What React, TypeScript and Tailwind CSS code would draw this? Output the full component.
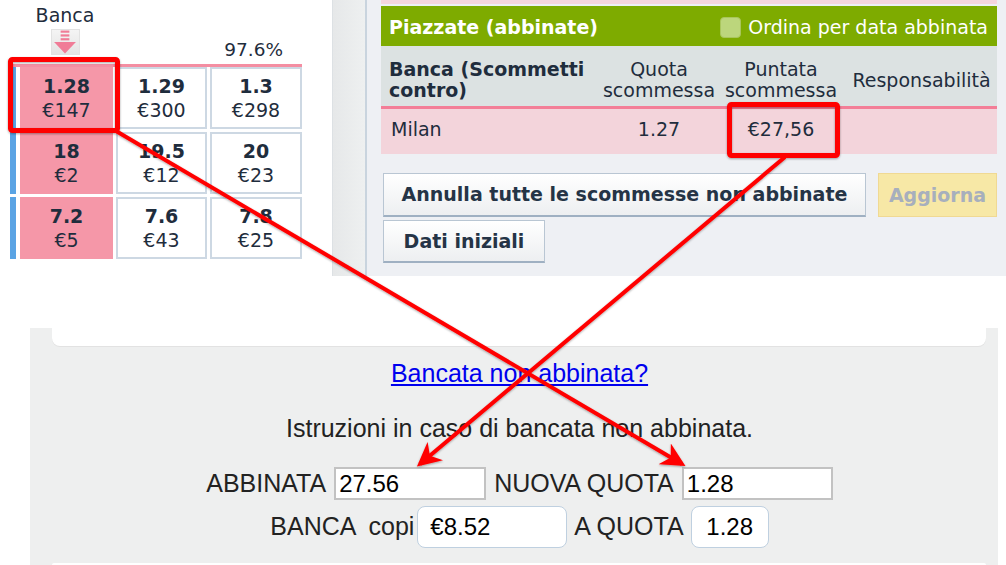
import React from "react";

type Cell = { odds: string; amount: string };

const rows: Cell[][] = [
  [
    { odds: "1.28", amount: "€147" },
    { odds: "1.29", amount: "€300" },
    { odds: "1.3", amount: "€298" },
  ],
  [
    { odds: "18", amount: "€2" },
    { odds: "19.5", amount: "€12" },
    { odds: "20", amount: "€23" },
  ],
  [
    { odds: "7.2", amount: "€5" },
    { odds: "7.6", amount: "€43" },
    { odds: "7.8", amount: "€25" },
  ],
];

function BackArrowIcon() {
  return (
    <div className="w-[29px] h-[26px] bg-gradient-to-b from-[#f4f4f4] to-[#e4e4e4] border border-[#e2e2e2] flex items-center justify-center">
      <svg width="24" height="24" viewBox="0 0 22 22">
        <rect x="7" y="0.5" width="8" height="2" fill="#f07c97" />
        <rect x="7" y="4" width="8" height="2" fill="#f07c97" />
        <rect x="7" y="7.5" width="8" height="2" fill="#f07c97" />
        <path d="M1 11 L21 11 L11 21.5 Z" fill="#f07c97" />
      </svg>
    </div>
  );
}

function Overlay() {
  return (
    <svg
      className="absolute inset-0 pointer-events-none"
      width="1006"
      height="565"
      viewBox="0 0 1006 565"
    >
      <defs>
        <marker id="head" viewBox="0 0 12 12" refX="10" refY="6" markerWidth="6" markerHeight="6" orient="auto">
          <path d="M0 0 L12 6 L0 12 L3.5 6 Z" fill="#ff0000" />
        </marker>
        <filter id="sh" x="-10%" y="-10%" width="120%" height="120%">
          <feDropShadow dx="0" dy="1" stdDeviation="1" floodColor="#000" floodOpacity="0.35" />
        </filter>
      </defs>
      <g filter="url(#sh)">
        <rect x="10.5" y="59.5" width="107" height="71" rx="2" fill="none" stroke="#ff0000" strokeWidth="5" />
        <rect x="729.5" y="104.5" width="108" height="51" rx="2" fill="none" stroke="#ff0000" strokeWidth="5" />
        <line x1="116" y1="131" x2="682" y2="464" stroke="#ff0000" strokeWidth="4" markerEnd="url(#head)" />
        <line x1="785" y1="157" x2="420" y2="464" stroke="#ff0000" strokeWidth="4" markerEnd="url(#head)" />
      </g>
    </svg>
  );
}

export default function App() {
  return (
    <div className="relative w-[1006px] h-[565px] overflow-hidden bg-white">
      {/* top: ladder + matched bets */}
      <div className="flex h-[276px] font-['DejaVu_Sans',sans-serif] text-[#1f2d3d]">
        <div className="w-[333px] pl-[10px]">
          <div className="w-[110px] pt-[3px] h-[28px] text-center text-[19px] leading-[24px]">Banca</div>
          <div className="flex items-end h-[36px]">
            <div className="w-[110px] flex justify-center mb-[9px]">
              <BackArrowIcon />
            </div>
            <div className="w-[182px] text-right pr-[19px] text-[18.5px] leading-[22px] mb-[3px]">97.6%</div>
          </div>
          <div className="w-[292px] h-[3px] bg-[#f48ea2]" />
          <div className="flex flex-col gap-[3px] w-[292px]">
            {rows.map((row, i) => (
              <div key={i} className="flex h-[62px] gap-[3px]">
                <div className="flex w-[103px]">
                  <div className="w-[6px] bg-[#5aa4e4]" />
                  <div className="flex-1 ml-[4px] bg-[#f597a8] flex flex-col items-center justify-center leading-[24px]">
                    <span className="text-[19px] font-bold">{row[0].odds}</span>
                    <span className="text-[19px]">{row[0].amount}</span>
                  </div>
                </div>
                {row.slice(1).map((c, j) => (
                  <div
                    key={j}
                    className={`${j === 0 ? "w-[91px]" : "w-[92px]"} border-2 border-[#cdd8e3] bg-white flex flex-col items-center justify-center leading-[24px]`}
                  >
                    <span className="text-[19px] font-bold">{c.odds}</span>
                    <span className="text-[19px]">{c.amount}</span>
                  </div>
                ))}
              </div>
            ))}
          </div>
        </div>

        <div className="w-[35px] bg-gradient-to-r from-[#e6e8e9] to-[#eef0f0] border-l border-[#dde1e4] border-r-2 border-r-[#c9d4de]" />

        <div className="flex-1 bg-[#eef0f4] pl-[14px] pr-[9px]">
          <div className="h-[4px] bg-[#f5d6dd]" />
          <div className="mt-[2px] h-[40px] bg-[#7eab00] flex items-center justify-between pl-[8px] pr-[9px] pt-[3px] text-white text-[19px]">
            <span className="font-bold">Piazzate (abbinate)</span>
            <span className="flex items-center gap-[7px]">
              <span className="w-[21px] h-[21px] rounded-[4px] bg-[#bcd67c] border border-[#a9c65c]" />
              Ordina per data abbinata
            </span>
          </div>
          <div className="h-[60px] bg-[#dce2e2] flex items-center pt-[8px] text-[19px] leading-[21px]">
            <div className="w-[221px] pl-[8px] font-bold">
              Banca (Scommetti
              <br />
              contro)
            </div>
            <div className="w-[114px] text-center">
              Quota
              <br />
              scommessa
            </div>
            <div className="w-[130px] text-center">
              Puntata
              <br />
              scommessa
            </div>
            <div className="flex-1 text-center">Responsabilità</div>
          </div>
          <div className="h-[3px] bg-[#f37e97]" />
          <div className="h-[45px] bg-[#f3d4db] flex items-center text-[19px] pb-[4px]">
            <div className="w-[221px] pl-[10px]">Milan</div>
            <div className="w-[114px] text-center">1.27</div>
            <div className="w-[130px] text-center">€27,56</div>
          </div>
          <div className="ml-[2px] mt-[19px] flex gap-[12px]">
            <button className="w-[483px] h-[44px] bg-gradient-to-b from-white to-[#edeff1] border border-[#b9c6d3] border-b-2 border-b-[#9fb0c2] text-[19px] font-bold text-[#253446]">
              Annulla tutte le scommesse non abbinate
            </button>
            <button className="w-[119px] h-[44px] bg-[#f7e8a6] border border-[#f0d993] text-[19px] font-bold text-[#a7afbd]">
              Aggiorna
            </button>
          </div>
          <button className="ml-[2px] mt-[3px] w-[162px] h-[43px] bg-gradient-to-b from-white to-[#edeff1] border border-[#b9c6d3] border-b-2 border-b-[#9fb0c2] text-[19px] font-bold text-[#253446]">
            Dati iniziali
          </button>
        </div>
      </div>

      {/* bottom: unmatched bet instructions */}
      <div className="mt-[52px] ml-[30px] w-[968px] h-[237px] bg-[#eeefef] font-['Liberation_Sans',Arial,sans-serif] text-[#222] flex flex-col items-center pl-[11px]">
        <div className="self-stretch ml-[11px] mr-[12px] h-[18px] bg-white rounded-b-[8px] shadow-[0_1px_0_#e2e2e2]" />
        <a href="#" className="mt-[12px] text-[25px] leading-[30px] text-[#0000ee] underline">
          Bancata non abbinata?
        </a>
        <div className="mt-[25px] text-[25px] leading-[30px]">Istruzioni in caso di bancata non abbinata.</div>
        <div className="mt-[22px] flex items-center gap-[8px] text-[25px]">
          <span>ABBINATA</span>
          <div className="w-[152px] h-[33px] bg-white border-2 border-[#c2c2c2] px-[3px] flex items-center text-[24px] text-black">27.56</div>
          <span>NUOVA QUOTA</span>
          <div className="w-[151px] h-[33px] bg-white border-2 border-[#c2c2c2] px-[3px] flex items-center text-[24px] text-black">1.28</div>
        </div>
        <div className="mt-[3px] flex items-center text-[25px]">
          <span>BANCA</span>
          <span className="ml-[12px]">copi</span>
          <div className="ml-[3px] w-[150px] h-[42px] bg-white border border-[#bfd0e0] rounded-[8px] pl-[12px] flex items-center text-[24px] text-black">
            €8.52
          </div>
          <span className="ml-[7px]">A QUOTA</span>
          <div className="ml-[7px] w-[78px] h-[42px] bg-white border border-[#bfd0e0] rounded-[8px] flex items-center justify-center text-[24px] text-black">
            1.28
          </div>
        </div>
        <div className="mt-auto self-stretch ml-[11px] mr-[12px] h-[2px] bg-white rounded-t-[6px]" />
      </div>

      <Overlay />
    </div>
  );
}
